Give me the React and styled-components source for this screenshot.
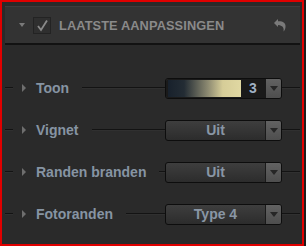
import styled, { createGlobalStyle } from "styled-components";

const Global = createGlobalStyle`
  html, body { margin: 0; padding: 0; background: #1c1c1c; }
  body { font-family: "Liberation Sans", Arial, sans-serif; }
`;

const Frame = styled.div`
  box-sizing: border-box;
  width: 304px;
  height: 246px;
  border: 2px solid #e00000;
  background: #2a2a2a;
  padding: 4px 2px 0 3px;
`;

const Header = styled.div`
  box-sizing: border-box;
  height: 39px;
  display: flex;
  align-items: center;
  background: #333333;
  border-top: 1px solid #3d3d3d;
  border-bottom: 2px solid #121212;
  padding: 0 13px 0 14px;
`;

const Caret = styled.span`
  width: 0;
  height: 0;
  border-left: 3.5px solid transparent;
  border-right: 3.5px solid transparent;
  border-top: 4px solid #7a7a7a;
  margin-right: 8px;
`;

const Check = styled.span`
  box-sizing: border-box;
  width: 18px;
  height: 17px;
  border: 1px solid #232323;
  background: #2f2f2f;
  display: flex;
  align-items: center;
  justify-content: center;
  margin-right: 8px;
`;

const Title = styled.div`
  flex: 1;
  font-size: 12.8px;
  font-weight: bold;
  color: #8a8a8a;
  letter-spacing: 0.1px;
`;

const List = styled.div`
  padding-top: 22px;
`;

const Row = styled.div`
  height: 42px;
  display: flex;
  align-items: center;
`;

const Line = styled.span`
  height: 1px;
  background: #131313;
  border-bottom: 1px solid #303030;
  width: ${({ w }) => (w ? w : "auto")};
  flex: ${({ grow }) => (grow ? 1 : "none")};
  margin: ${({ m }) => (m ? m : "0")};
`;

const Arrow = styled.span`
  width: 0;
  height: 0;
  border-top: 4px solid transparent;
  border-bottom: 4px solid transparent;
  border-left: 4px solid #6e6e6e;
  margin: 0 10px 0 9px;
`;

const Label = styled.span`
  font-size: 14px;
  font-weight: bold;
  color: #8694a3;
`;

const Select = styled.div`
  box-sizing: border-box;
  width: 117px;
  height: 21px;
  border: 1px solid #0d0d0d;
  border-radius: 3px;
  background: linear-gradient(#3e3e3e, #2c2c2c);
  display: flex;
  overflow: hidden;
`;

const Value = styled.div`
  flex: 1;
  display: flex;
  align-items: center;
  justify-content: center;
  font-size: 14px;
  font-weight: bold;
  color: #8996a5;
`;

const Toned = styled.div`
  flex: 1;
  display: flex;
  align-items: center;
  background: #1a1a1a;
  padding-left: 2px;
`;

const Swatch = styled.div`
  width: 73px;
  height: 17px;
  background: linear-gradient(90deg, #18212c 0%, #232c34 22%, #8e8b72 55%, #d6cd98 75%, #e0d8a2 100%);
`;

const Num = styled.div`
  flex: 1;
  text-align: center;
  font-size: 14px;
  font-weight: bold;
  color: #9fb0c4;
`;

const Btn = styled.div`
  width: 15px;
  background: linear-gradient(#626262, #4e4e4e);
  border-left: 1px solid #1a1a1a;
  display: flex;
  align-items: center;
  justify-content: center;

  &::after {
    content: "";
    border-left: 4px solid transparent;
    border-right: 4px solid transparent;
    border-top: 5px solid #262626;
  }
`;

const rows = [
  { label: "Toon", tone: true, value: "3" },
  { label: "Vignet", value: "Uit" },
  { label: "Randen branden", value: "Uit" },
  { label: "Fotoranden", value: "Type 4" },
];

export default function App() {
  return (
    <>
      <Global />
      <Frame>
        <Header>
          <Caret />
          <Check>
            <svg width="13" height="13" viewBox="0 0 13 13">
              <path d="M2 7 L5 11 L11 1.5" fill="none" stroke="#8a8a8a" strokeWidth="1.8" />
            </svg>
          </Check>
          <Title>LAATSTE AANPASSINGEN</Title>
          <svg width="14" height="14" viewBox="0 0 14 14">
            <path d="M1 5 L5 1 L5 3.2 C10 3 13 5 12.5 9 C12.3 11 11.5 12.5 10.5 13.5 C11 11 10.8 7.5 5 7 L5 9 Z" fill="#7a7a7a" />
          </svg>
        </Header>
        <List>
          {rows.map((r) => (
            <Row key={r.label}>
              <Line w="8px" />
              <Arrow />
              <Label>{r.label}</Label>
              <Line grow m="0 0 0 13px" />
              <Select>
                {r.tone ? (
                  <Toned>
                    <Swatch />
                    <Num>{r.value}</Num>
                  </Toned>
                ) : (
                  <Value>{r.value}</Value>
                )}
                <Btn />
              </Select>
              <Line w="18px" />
            </Row>
          ))}
        </List>
      </Frame>
    </>
  );
}
